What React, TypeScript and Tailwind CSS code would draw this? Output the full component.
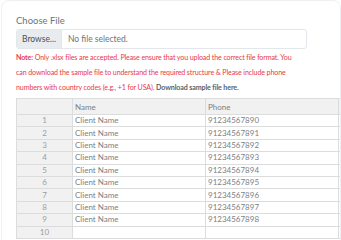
const rows = [
  ["1", "Client Name", "91234567890"],
  ["2", "Client Name", "91234567891"],
  ["3", "Client Name", "91234567892"],
  ["4", "Client Name", "91234567893"],
  ["5", "Client Name", "91234567894"],
  ["6", "Client Name", "91234567895"],
  ["7", "Client Name", "91234567896"],
  ["8", "Client Name", "91234567897"],
  ["9", "Client Name", "91234567898"],
  ["10", "", ""],
];

export default function App() {
  return (
    <div className="h-[240px] w-[341px] overflow-hidden bg-white font-['Lato',sans-serif]">
      <div className="ml-px h-[260px] overflow-hidden rounded-lg border border-[#eef0f3] pl-[14px] pt-[13px]">
        {/* File picker */}
        <label className="block text-[9.5px] leading-[14px] text-[#6c757d]">Choose File</label>
        <div className="mt-[1px] flex h-[20px] w-[291px] items-center overflow-hidden rounded-[3px] border border-[#e3e6ea] text-[8.5px]">
          <span className="flex h-full items-center border-r border-[#e3e6ea] bg-[#e9ecef] px-[5px] text-[#495057]">
            Browse...
          </span>
          <span className="pl-[6px] text-[#6c757d]">No file selected.</span>
        </div>

        {/* Note */}
        <p className="mt-[1px] whitespace-nowrap text-[7.1px] leading-[15px] tracking-[-0.12px] text-[#e8394a]">
          <span className="block">
            <b>Note:</b> Only .xlsx files are accepted. Please ensure that you upload the correct file format. You
          </span>
          <span className="block">
            can download the sample file to understand the required structure &amp; Please include phone
          </span>
          <span className="block">
            numbers with country codes (e.g., +1 for USA).{" "}
            <b className="text-[#5a5f66]">Download sample file here.</b>
          </span>
        </p>

        {/* Sheet */}
        <table className="mt-[3px] w-[400px] table-fixed border-collapse text-[8px] text-[#7b7f85]">
          <colgroup>
            <col className="w-[56px]" />
            <col className="w-[133px]" />
            <col className="w-[133px]" />
            <col className="w-[78px]" />
          </colgroup>
          <thead>
            <tr className="h-[16px] bg-[#f1f1f1]">
              <th className="border border-[#dcdcdc]" />
              <th className="border border-[#dcdcdc] pl-[2px] text-left font-normal">Name</th>
              <th className="border border-[#dcdcdc] pl-[2px] text-left font-normal">Phone</th>
              <th className="border border-[#dcdcdc]" />
            </tr>
          </thead>
          <tbody>
            {rows.map(([n, name, phone]) => (
              <tr key={n} className="h-[12.4px]">
                <td className="border border-[#dcdcdc] bg-[#f1f1f1] p-0 text-center leading-[11px] text-[#9a9ea3]">{n}</td>
                <td className="border border-[#dcdcdc] p-0 pl-[2px] leading-[11px]">{name}</td>
                <td className="border border-[#dcdcdc] p-0 pl-[2px] leading-[11px]">{phone}</td>
                <td className="border border-[#dcdcdc] p-0" />
              </tr>
            ))}
          </tbody>
        </table>
      </div>
    </div>
  );
}
